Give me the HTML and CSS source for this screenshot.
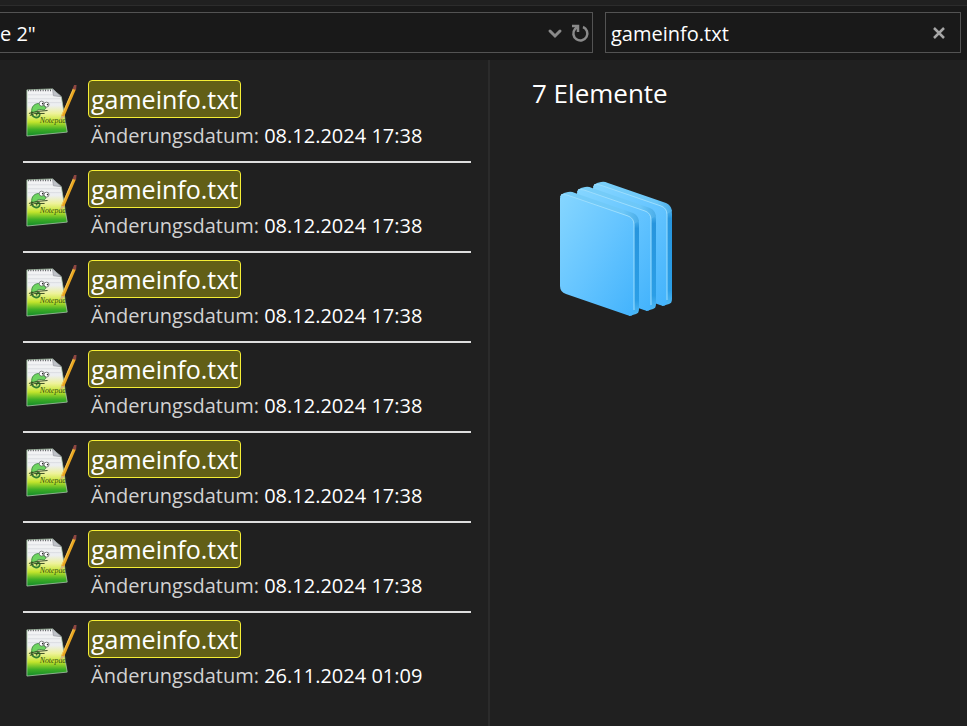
FILE: index.html
```html
<!DOCTYPE html>
<html lang="de">
<head>
  <meta charset="UTF-8">
  <meta name="viewport" content="width=device-width, initial-scale=1.0">
  <title>Suchergebnisse</title>
  <link rel="stylesheet" href="styles.css">
</head>
<body>
  <!-- Shared file icon -->
  <svg class="defs" width="0" height="0" aria-hidden="true">
    <defs>
      <linearGradient id="paper" x1="0" y1="0" x2="0" y2="1">
        <stop offset="0" stop-color="#f4f4f6"/>
        <stop offset="0.35" stop-color="#eceef0"/>
        <stop offset="0.52" stop-color="#eef29a"/>
        <stop offset="0.7" stop-color="#c4e52c"/>
        <stop offset="0.86" stop-color="#3fae26"/>
        <stop offset="1" stop-color="#128a2a"/>
      </linearGradient>
      <symbol id="file-icon" viewBox="0 0 56 56">
        <path d="M4 7 L30 6 L39 14 L45 50 L4 54 Z" fill="url(#paper)" stroke="#a9c9a9" stroke-width="0.8"/>
        <path d="M5 12h32M5 16h33M5 20h34" stroke="#cfd0d8" stroke-width="0.6"/>
        <path d="M5 7.500H30" stroke="#55555a" stroke-width="2" stroke-dasharray="1 1.500"/>
        <path d="M30 6 L31 13 L39 14 Z" fill="#bfc1c8" stroke="#8c8f96" stroke-width="0.6"/>
        <path d="M9 30 C8 24 12 20 18 21 L23 24 C24 26 22 28 19 27 C16 27 14 27 13 30" fill="#6ed45f" stroke="#2f7a32" stroke-width="0.8"/>
        <path d="M9 29 C8 36 17 37 17 32 C17 29 13 30 14 33" fill="none" stroke="#347f31" stroke-width="1.800"/>
        <path d="M6 31 L14 29 L25 28 M7 33 L12 31 L22 31" fill="none" stroke="#384a24" stroke-width="1"/>
        <circle cx="19" cy="21" r="2.500" fill="#fff" stroke="#555" stroke-width="0.7"/>
        <circle cx="24" cy="22" r="2.500" fill="#fff" stroke="#555" stroke-width="0.7"/>
        <circle cx="20" cy="21" r="0.8" fill="#222"/>
        <circle cx="25" cy="22" r="0.8" fill="#222"/>
        <text class="logo-word" x="17" y="41">Notepad</text>
        <path d="M51 5 L54 6 L42 34 L38 38 L39 33 Z" fill="#e9a51f"/>
        <path d="M51.500 5.500 L39.500 33" stroke="#f7cf62" stroke-width="0.8"/>
        <path d="M39 33 L42 34 L38 38 Z" fill="#d4b77c"/>
        <path d="M50.500 6 L52 2 L54.500 2 L54 7 Z" fill="#8e4742"/>
      </symbol>
    </defs>
  </svg>

  <div class="titlebar"></div>

  <!-- Address and Search -->
  <header class="toolbar">
    <div class="field address">
      <input type="text" value="e 2&quot;" aria-label="Adresse">
      <button class="icon-button" aria-label="Vorherige Orte">
        <svg width="16" height="16" viewBox="0 0 16 16"><path d="M3 6 L8 11 L13 6" fill="none" stroke="currentColor" stroke-width="3" stroke-linecap="round"/></svg>
      </button>
      <button class="icon-button" aria-label="Aktualisieren">
        <svg width="20" height="20" viewBox="0 0 20 20"><path d="M13 4 A7 7 0 1 1 5 6 L7 4" fill="none" stroke="currentColor" stroke-width="2.500"/><path d="M2 3H8V9" fill="none" stroke="currentColor" stroke-width="2.500"/></svg>
      </button>
    </div>
    <div class="field search">
      <input type="text" value="gameinfo.txt" aria-label="Suchen">
      <button class="icon-button" aria-label="Suche löschen">
        <svg width="16" height="16" viewBox="0 0 16 16"><path d="M3 3 L13 13 M13 3 L3 13" stroke="currentColor" stroke-width="2.500"/></svg>
      </button>
    </div>
  </header>

  <main class="panes">
    <!-- Search Results -->
    <ul class="results">
      <li class="result">
        <svg class="file-icon" aria-hidden="true"><use href="#file-icon"/></svg>
        <div class="info">
          <a class="name" href="#">gameinfo.txt</a>
          <p class="date">Änderungsdatum: <span>08.12.2024 17:38</span></p>
        </div>
      </li>
      <li class="result">
        <svg class="file-icon" aria-hidden="true"><use href="#file-icon"/></svg>
        <div class="info">
          <a class="name" href="#">gameinfo.txt</a>
          <p class="date">Änderungsdatum: <span>08.12.2024 17:38</span></p>
        </div>
      </li>
      <li class="result">
        <svg class="file-icon" aria-hidden="true"><use href="#file-icon"/></svg>
        <div class="info">
          <a class="name" href="#">gameinfo.txt</a>
          <p class="date">Änderungsdatum: <span>08.12.2024 17:38</span></p>
        </div>
      </li>
      <li class="result">
        <svg class="file-icon" aria-hidden="true"><use href="#file-icon"/></svg>
        <div class="info">
          <a class="name" href="#">gameinfo.txt</a>
          <p class="date">Änderungsdatum: <span>08.12.2024 17:38</span></p>
        </div>
      </li>
      <li class="result">
        <svg class="file-icon" aria-hidden="true"><use href="#file-icon"/></svg>
        <div class="info">
          <a class="name" href="#">gameinfo.txt</a>
          <p class="date">Änderungsdatum: <span>08.12.2024 17:38</span></p>
        </div>
      </li>
      <li class="result">
        <svg class="file-icon" aria-hidden="true"><use href="#file-icon"/></svg>
        <div class="info">
          <a class="name" href="#">gameinfo.txt</a>
          <p class="date">Änderungsdatum: <span>08.12.2024 17:38</span></p>
        </div>
      </li>
      <li class="result">
        <svg class="file-icon" aria-hidden="true"><use href="#file-icon"/></svg>
        <div class="info">
          <a class="name" href="#">gameinfo.txt</a>
          <p class="date">Änderungsdatum: <span>26.11.2024 01:09</span></p>
        </div>
      </li>
    </ul>

    <!-- Details Pane -->
    <aside class="details">
      <h1>7 Elemente</h1>
      <svg class="stack" width="116" height="136" viewBox="0 0 116 136" aria-hidden="true">
        <defs>
          <linearGradient id="face" x1="0" y1="0" x2="1" y2="1">
            <stop offset="0" stop-color="#86d6ff"/>
            <stop offset="0.5" stop-color="#66c5ff"/>
            <stop offset="1" stop-color="#43b3fc"/>
          </linearGradient>
          <linearGradient id="edge" x1="0" y1="0" x2="0" y2="1">
            <stop offset="0" stop-color="#6ac8f8"/>
            <stop offset="0.15" stop-color="#2795dd"/>
            <stop offset="0.85" stop-color="#2b9ee6"/>
            <stop offset="1" stop-color="#53bbf5"/>
          </linearGradient>
          <linearGradient id="top" x1="0" y1="0" x2="1" y2="0">
            <stop offset="0" stop-color="#7bcff8"/>
            <stop offset="0.8" stop-color="#6cc7f8"/>
            <stop offset="1" stop-color="#4aade8"/>
          </linearGradient>
          <g id="folder">
            <path d="M66 32 L74 33 Q80 36 80 43 V128 Q80 132 77 133 L70 135 L66 120 Z" fill="url(#edge)"/>
            <path d="M1 16 Q2 13 5 12 L9 11 Q12 10 16 12 L74 32 Q79 34 80 40 L75 43 L69 36 L6 15 Z" fill="url(#top)"/>
            <path d="M1 18 Q1 11 8 14 L69 35 Q75 37 75 44 V129 Q75 137 68 134 L7 113 Q1 111 1 105 Z" fill="url(#face)"/>
            <path d="M2 14 Q4 13 8 14 L69 35 Q75 37 75 44 V129" fill="none" stroke="#9cdefe" stroke-width="1"/>
          </g>
        </defs>
        <use href="#folder" x="33" y="-10"/>
        <use href="#folder" x="17" y="-5"/>
        <use href="#folder"/>
      </svg>
    </aside>
  </main>
</body>
</html>
```

FILE: styles.css
```css
* {
  box-sizing: border-box;
}
body {
  margin: 0;
  min-height: 100vh;
  display: flex;
  flex-direction: column;
  background: #202020;
  color: #fff;
  font-family: "Open Sans", "Noto Sans", sans-serif;
}
.defs {
  position: absolute;
}
.titlebar {
  height: 6px;
  border-bottom: 1px solid #2c2c2c;
}
.toolbar {
  display: grid;
  grid-template-columns: 593fr 356fr;
  gap: 12px;
  padding: 6px 6px 7px 0;
  background: #191919;
}
.field {
  display: flex;
  align-items: center;
  height: 41px;
  border: 1px solid #535353;
}
.field input {
  flex: 1;
  min-width: 0;
  padding: 2px 0 0;
  border: none;
  outline: none;
  background: transparent;
  color: #fff;
  font-family: inherit;
  font-size: 20px;
}
.address {
  border-left: none;
}
.search {
  padding: 0 9px 0 5px;
}
.icon-button {
  display: flex;
  align-items: center;
  justify-content: center;
  width: 25px;
  height: 30px;
  padding: 0;
  border: none;
  background: transparent;
  color: #8a8a8a;
}
.search .icon-button {
  color: #a6a6a6;
}
.panes {
  flex: 1;
  display: grid;
  grid-template-columns: 490fr 477fr;
}
.results {
  margin: 0;
  padding: 13px 17px 0 23px;
  border-right: 2px solid #2b2b2b;
  list-style: none;
}
.result {
  display: flex;
  gap: 10px;
  height: 90px;
  padding-top: 7px;
  border-bottom: 2px solid #dedede;
}
.result:last-child {
  border-bottom: none;
}
.file-icon {
  width: 55px;
  height: 55px;
  margin-top: 3px;
}
.logo-word {
  font-family: "Liberation Serif", serif;
  font-size: 8px;
  font-style: italic;
  fill: #2f4a12;
}
.name {
  display: block;
  width: fit-content;
  height: 38px;
  padding: 0 2px;
  border: 1px solid #f5ee35;
  border-radius: 4px;
  background: #625f17;
  color: #fff;
  font-size: 25px;
  line-height: 36px;
  text-decoration: none;
}
.date {
  margin: 4px 0 0 3px;
  color: #d2d2d2;
  font-size: 20px;
  line-height: 28px;
  white-space: nowrap;
}
.date span {
  color: #fff;
}
.details {
  padding: 14px 42px;
}
.details h1 {
  margin: 0;
  font-size: 26px;
  font-weight: 400;
  line-height: 38px;
}
.stack {
  display: block;
  margin: 69px 0 0 27px;
}
```
